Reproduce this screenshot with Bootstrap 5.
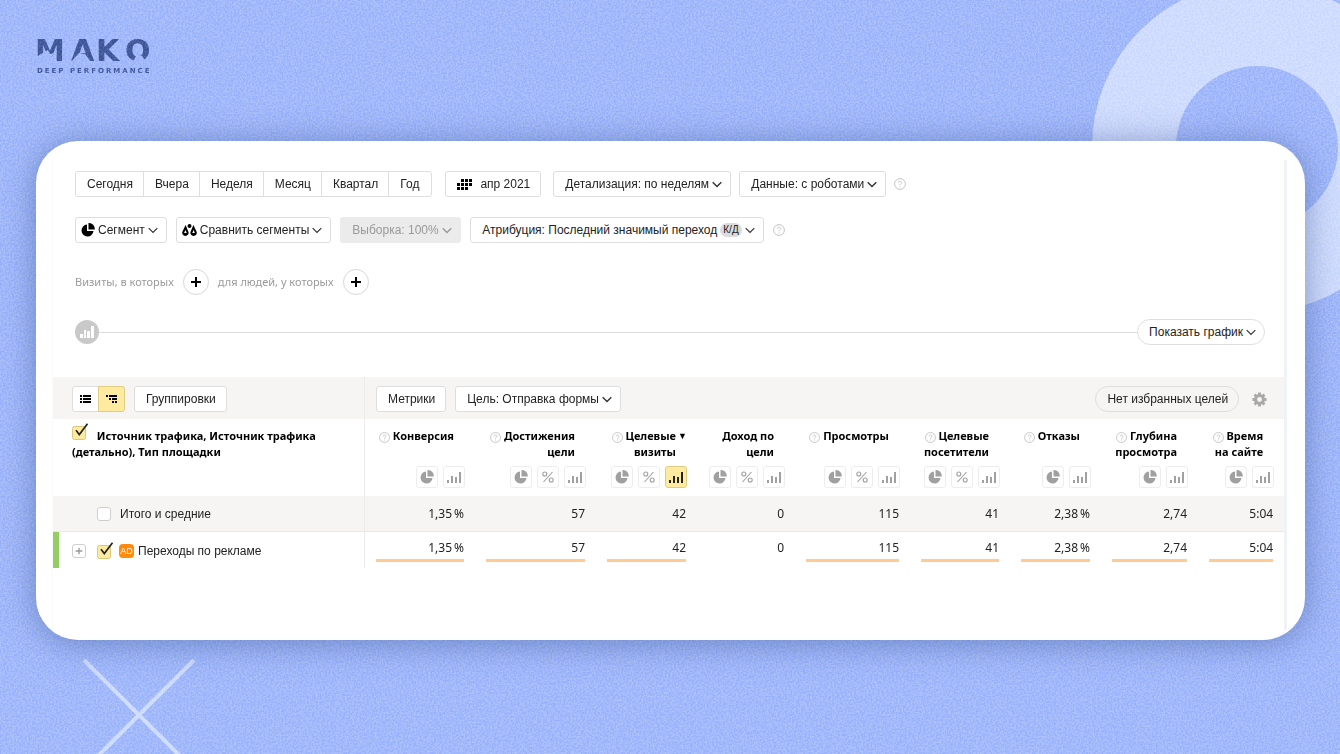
<!DOCTYPE html>
<html lang="ru">
<head>
<meta charset="utf-8">
<meta name="viewport" content="width=device-width, initial-scale=1">
<title>MAKO — отчёт по источникам трафика</title>
<link href="https://cdn.jsdelivr.net/npm/bootstrap@5.3.0/dist/css/bootstrap.min.css" rel="stylesheet">
<style>
  :root {
    --ui: "Liberation Sans", Arial, sans-serif;
    --txt: "Noto Sans", "Open Sans", sans-serif;
    --line: #dedede;
    --stripe: #f6f5f3;
    --sun: #ffeba0;
  }
  body { background: #a5bcfb; font: 12px/16px var(--txt); color: #222; }
  .stage { min-height: 100vh; }
  .decor { pointer-events: none; }
  .decor-ring { width: 248px; height: 312px; }
  .decor-cross { left: 82px; width: 114px; height: 96px; }
  .decor-grain { opacity: .22; mix-blend-mode: soft-light; }
  .brand { height: 141px; padding: 36px; }
  .brand svg { overflow: visible; }
  .panel { margin: 0 35px 0 36px; padding: 19px 18px 10px 16px; border-radius: 42px; background: #fff; box-shadow: 0 3px 34px rgba(50, 75, 140, .5); }
  .sheet { border-right: 3px solid #eff3f8; border-left: 1px solid #fafafa; padding: 11px 0 62px; }
  .controls { padding: 0 19px 0 22px; }
  .filters { gap: 9px; margin: 20px 0 26px; }
  .conditions { gap: 9px; font-size: 11px; color: #9b9b9b; }
  .chart-toggle { margin: 24px 0 32px; }
  .ctl { height: 26px; padding: 0 10px 0 11px; border: 1px solid var(--line); border-radius: 3px; background-color: #fff; font: 12px/24px var(--ui); color: #222; white-space: nowrap; }
  .ctl svg { flex: none; }
  .ctl-drop { display: flex; align-items: center; gap: 3px; padding-right: 8px; }
  .ctl-tight { padding-left: 5px; }
  select.ctl { appearance: none; padding-right: 21px; background: #fff url("data:image/svg+xml,%3Csvg xmlns='http://www.w3.org/2000/svg' width='10' height='7'%3E%3Cpath d='M.7 1.2 5 5.5 9.3 1.2' fill='none' stroke='%23333' stroke-width='1.4'/%3E%3C/svg%3E") no-repeat right 8px center; }
  select.ctl:disabled { background: #ebebeb url("data:image/svg+xml,%3Csvg xmlns='http://www.w3.org/2000/svg' width='10' height='7'%3E%3Cpath d='M.7 1.2 5 5.5 9.3 1.2' fill='none' stroke='%23999' stroke-width='1.3'/%3E%3C/svg%3E") no-repeat right 8px center; border-color: #ebebeb; color: #999; opacity: 1; }
  .periods { margin-right: 13px; }
  .periods .ctl + .ctl, .modes .ctl + .ctl { margin-left: -1px; }
  .periods .ctl:not(:first-child), .modes .ctl:not(:first-child) { border-top-left-radius: 0; border-bottom-left-radius: 0; }
  .periods .ctl:not(:last-child), .modes .ctl:not(:last-child) { border-top-right-radius: 0; border-bottom-right-radius: 0; }
  .periods .ctl:last-child { padding-right: 12px; }
  .modes .ctl { width: 27px; padding: 0; }
  .ctl-pill { border-radius: 13px; }
  .modes .ctl-on { background: var(--sun); border-color: #e0cd85; }
  .tools { gap: 9px; }
  .gear { margin: 0 6px 0 4px; }
  .plus { width: 26px; height: 26px; border: 1px solid #d8d8d8; border-radius: 50%; background: #fff; }
  .tag { background: #dcdcdc; border-radius: 8px; padding: 0 3px; font-size: 10px; line-height: 14px; }
  .help { width: 12px; height: 12px; color: #c4c4c4; flex: none; }
  .knob { width: 24px; height: 24px; border-radius: 50%; background: #c9c9c9; color: #fff; }
  .rule-line { height: 1px; background: #dcdcdc; }

  .report { table-layout: fixed; border-collapse: separate; border-spacing: 0; }
  .report th, .report td { padding: 0 11px; text-align: right; vertical-align: top; font-weight: 400; }
  .report th:first-child { text-align: left; padding-left: 19px; border-right: 1px solid #ebebeb; }
  .bar-row > * { height: 42px; background: var(--stripe); }
  .report .bar-row th, .report .bar-row td { padding-top: 9px; }
  .head-row { height: 77px; }
  .report .head-row th { padding-top: 9px; font-size: 11px; font-weight: 700; color: #000; }
  .head-row th:not(:first-child) { padding-right: 10px; }
  .head-row .tick { margin: -6px 5px 0 0; }
  .label-box { height: 38px; }
  .sorter { width: 11px; font-size: 9px; }
  .label-box .help { width: 11px; height: 11px; }
  .chips { gap: 5px; }
  .chip { width: 22px; height: 22px; border: 1px solid #ededed; border-radius: 3px; background: #fff; color: #a0a0a0; padding: 0; }
  .chip-on { background: var(--sun); border-color: #e0cd85; color: #222; }
  .sum-row > * { height: 36px; background: var(--stripe); border-bottom: 1px solid #e9e9e9; }
  .report .sum-row td { padding-top: 10px; }
  .report .sum-row th { padding: 10px 0 0 44px; }
  .data-row > * { height: 36px; }
  .report .data-row td { padding-top: 8px; }
  .report .data-row th { padding: 10px 0 0 13px; border-left: 6px solid #96cd62; }
  .data-row .tick { margin: 0 5px 0 11px; }
  .meter { height: 3px; margin-top: 3px; background: #ffcb94; }
  .row-name { font-family: var(--ui); font-size: 12px; }
  .tick { appearance: none; width: 14px; height: 14px; margin: 0; border: 1px solid #cfcfcf; border-radius: 3px; background: #fff; }
  .tick:checked { width: 17px; height: 17px; border: 0; border-radius: 0; background: url("data:image/svg+xml,%3Csvg xmlns='http://www.w3.org/2000/svg' width='17' height='17'%3E%3Crect x='.5' y='3.5' width='13' height='13' rx='2' fill='%23ffeba0' stroke='%23dcc77c'/%3E%3Cpath d='M4 7.2 7.3 11.5 15.5.8' fill='none' stroke='%23222' stroke-width='1.7'/%3E%3C/svg%3E"); }
  .expand { width: 14px; height: 14px; border: 1px solid #cfcfcf; border-radius: 3px; background: #fff; padding: 0; color: #999; }
  .ad { width: 15px; height: 14px; border-radius: 4px; background: #ff8a0c; color: #fff; font: 9px/14px var(--ui); text-align: center; }
</style>
</head>
<body>
<svg class="d-none" xmlns="http://www.w3.org/2000/svg">
  <symbol id="pie" viewBox="0 0 14 14"><path d="M6 1.500A6 6 0 1 0 12.500 8H6z"/><path d="M7.500 0A6 6 0 0 1 13.800 6.500H7.500z"/></symbol>
  <symbol id="bars" viewBox="0 0 14 11"><path d="M0 8h2v3H0zM4 4h2v7H4zM8 5h2v6H8zM12 0h2v11h-2z"/></symbol>
  <symbol id="pct" viewBox="0 0 12 12"><g fill="none" stroke="currentColor" stroke-width="1.100"><circle cx="2.800" cy="3" r="2"/><circle cx="9.200" cy="9" r="2"/><path d="M10.500 1 1.500 11"/></g></symbol>
  <symbol id="chev" viewBox="0 0 10 7"><path d="M.7 1.200 5 5.500 9.300 1.200" fill="none" stroke="#333" stroke-width="1.200"/></symbol>
  <symbol id="help" viewBox="0 0 12 12"><g fill="none" stroke="currentColor"><circle cx="6" cy="6" r="5.400"/><path d="M4.400 4.800c0-2.100 3.200-2.100 3.200-.2C7.600 5.700 6 5.700 6 7.200M6 8.300v1"/></g></symbol>
  <symbol id="plus" viewBox="0 0 12 12"><path d="M6 1v10M1 6h10" stroke="currentColor" stroke-width="2"/></symbol>
</svg>

<div class="stage position-relative overflow-hidden">
  <svg class="decor decor-ring position-absolute top-0 end-0" viewBox="0 0 248 312" fill="none"><circle cx="165" cy="147" r="123" stroke="#d2defe" stroke-width="84"/></svg>
  <svg class="decor decor-cross position-absolute bottom-0" viewBox="0 0 114 96"><path d="M2 2l110 110M112 2L2 112" stroke="#d2defe" stroke-width="4"/></svg>

  <header class="brand position-relative">
    <svg width="124" height="40" viewBox="0 0 124 40" role="img" aria-label="MAKO Deep Performance">
      <g fill="#455d9e" font-family="DejaVu Sans" font-weight="700">
        <text x="-1 35 60 89" y="25" font-size="30">MAKO</text>
        <text x="1" y="37" font-size="7" letter-spacing="2">DEEP PERFORMANCE</text>
      </g>
      <path fill="#a5bcfb" d="M0 21 12 14l2 4 4-1-6 9H0zM35 26l8-9 6 1 6 8zM97 26l3-6h6l4 6z"/>
    </svg>
  </header>

  <svg class="decor decor-grain position-absolute top-0 start-0 w-100 h-100">
    <filter id="grain" color-interpolation-filters="sRGB"><feTurbulence type="fractalNoise" baseFrequency=".55" numOctaves="3" seed="4"/><feColorMatrix values="3 0 0 0 -1.100  3 0 0 0 -1.100  3 0 0 0 -1.100  0 0 0 0 1"/></filter>
    <rect width="100%" height="100%" filter="url(#grain)"/>
  </svg>

  <main class="panel position-relative">
    <div class="sheet">
      <div class="controls">
        <div class="d-flex align-items-center">
          <div class="periods d-flex">
            <button class="ctl" type="button">Сегодня</button><button class="ctl" type="button">Вчера</button><button class="ctl" type="button">Неделя</button><button class="ctl" type="button">Месяц</button><button class="ctl" type="button">Квартал</button><button class="ctl" type="button">Год</button>
          </div>
          <button class="ctl d-flex align-items-center gap-2 me-2" type="button">
            <svg width="15" height="11" viewBox="0 0 15 11"><path d="M0 4h3v3H0zM0 8h3v3H0zM4 0h3v3H4zM4 4h3v3H4zM4 8h3v3H4zM8 0h3v3H8zM8 4h3v3H8zM8 8h3v3H8zM12 0h3v3h-3zM12 4h3v3h-3z"/></svg>апр 2021
          </button>
          <select class="ctl ms-1 me-2" aria-label="Детализация"><option>Детализация: по неделям</option></select>
          <select class="ctl me-2" aria-label="Данные"><option>Данные: с роботами</option></select>
          <svg class="help"><use href="#help"/></svg>
        </div>
        <div class="filters d-flex align-items-center">
          <button class="ctl ctl-drop ctl-tight" type="button"><svg width="14" height="14"><use href="#pie"/></svg>Сегмент<svg width="10" height="7"><use href="#chev"/></svg></button>
          <button class="ctl ctl-drop ctl-tight" type="button">
            <svg width="15" height="13" viewBox="0 0 15 13"><circle cx="7.500" cy="2" r="2"/><path fill-rule="evenodd" d="M3.600 1 .5 7.500a3.200 3.200 0 1 0 5.800 0zM3.400 6l1.300 3H2.100zM11.400 1 8.700 7.500a3.200 3.200 0 1 0 5.800 0zM11.600 6l1.300 3h-2.600z"/></svg>Сравнить сегменты<svg width="10" height="7"><use href="#chev"/></svg></button>
          <select class="ctl" aria-label="Выборка" disabled><option>Выборка: 100%</option></select>
          <button class="ctl ctl-drop" type="button">Атрибуция: Последний значимый переход <span class="tag">К/Д</span><svg width="10" height="7"><use href="#chev"/></svg></button>
          <svg class="help"><use href="#help"/></svg>
        </div>
        <div class="conditions d-flex align-items-center">
          <span>Визиты, в которых</span>
          <button class="plus d-flex align-items-center justify-content-center p-0" type="button" aria-label="Добавить условие визитов"><svg width="12" height="12"><use href="#plus"/></svg></button>
          <span>для людей, у которых</span>
          <button class="plus d-flex align-items-center justify-content-center p-0" type="button" aria-label="Добавить условие людей"><svg width="12" height="12"><use href="#plus"/></svg></button>
        </div>
        <div class="chart-toggle d-flex align-items-center">
          <span class="knob d-flex align-items-center justify-content-center"><svg width="14" height="12" viewBox="0 0 14 12" fill="currentColor"><path d="M0 8h3v4H0zM4 4h2v8H4zM7 5h3v7H7zM11 0h3v12h-3z"/></svg></span>
          <span class="rule-line flex-grow-1"></span>
          <button class="ctl ctl-drop ctl-pill" type="button">Показать график<svg width="10" height="7"><use href="#chev"/></svg></button>
        </div>
      </div>

      <table class="report w-100" id="report">
        <colgroup><col style="width:312px"><col style="width:110px"><col style="width:121px"><col style="width:101px"><col style="width:98px"><col style="width:115px"><col style="width:100px"><col style="width:91px"><col style="width:97px"><col style="width:86px"></colgroup>
        <thead>
          <tr class="bar-row">
            <th>
              <div class="tools d-flex">
                <div class="modes d-flex">
                  <button class="ctl d-flex align-items-center justify-content-center" type="button" aria-label="Список"><svg width="11" height="8" viewBox="0 0 11 8"><path d="M0 0h2v2H0zM3 0h8v2H3zM0 3h2v2H0zM3 3h8v2H3zM0 6h2v2H0zM3 6h8v2H3z"/></svg></button>
                  <button class="ctl ctl-on d-flex align-items-center justify-content-center" type="button" aria-label="Дерево"><svg width="11" height="8" viewBox="0 0 11 8"><path d="M0 0h2v2H0zM3 0h8v2H3zM3 3h2v2H3zM6 3h5v2H6zM6 6h2v2H6zM9 6h2v2H9z"/></svg></button>
                </div>
                <button class="ctl" type="button">Группировки</button>
              </div>
            </th>
            <td colspan="9">
              <div class="tools d-flex align-items-center">
                <button class="ctl" type="button">Метрики</button>
                <select class="ctl" aria-label="Цель"><option>Цель: Отправка формы</option></select>
                <button class="ctl ctl-pill ms-auto bg-transparent" type="button">Нет избранных целей</button>
                <svg class="gear" width="15" height="15" viewBox="0 0 16 16" fill="none" stroke="#a9a9a9"><circle cx="8" cy="8" r="4.200" stroke-width="3.200"/><path stroke-width="3" d="M8 .5v3M8 12.500v3M.5 8h3M12.500 8h3M2.700 2.700l2 2M11.300 11.300l2 2M2.700 13.300l2-2M11.300 4.700l2-2"/></svg>
              </div>
            </td>
          </tr>
          <tr class="head-row">
            <th scope="col"><input class="tick" type="checkbox" checked aria-label="Выбрать все"> Источник трафика, Источник трафика (детально), Тип площадки</th>
            <th scope="col" data-label="Конверсия" data-tools="pie bars"></th>
            <th scope="col" data-label="Достижения|цели" data-tools="pie pct bars"></th>
            <th scope="col" data-label="Целевые|визиты" data-tools="pie pct bars" data-sorted></th>
            <th scope="col" data-label="Доход по|цели" data-tools="pie pct bars" data-nohelp></th>
            <th scope="col" data-label="Просмотры" data-tools="pie pct bars"></th>
            <th scope="col" data-label="Целевые|посетители" data-tools="pie pct bars"></th>
            <th scope="col" data-label="Отказы" data-tools="pie bars"></th>
            <th scope="col" data-label="Глубина|просмотра" data-tools="pie bars"></th>
            <th scope="col" data-label="Время|на сайте" data-tools="pie bars"></th>
          </tr>
        </thead>
        <tbody>
          <tr class="sum-row">
            <th scope="row"><div class="tools d-flex align-items-center"><input class="tick" type="checkbox" id="sum"><label class="row-name" for="sum">Итого и средние</label></div></th>
            <td>1,35&thinsp;%</td><td>57</td><td>42</td><td>0</td><td>115</td><td>41</td><td>2,38&thinsp;%</td><td>2,74</td><td>5:04</td>
          </tr>
          <tr class="data-row">
            <th scope="row"><div class="d-flex align-items-center"><button class="expand d-flex align-items-center justify-content-center" type="button" aria-label="Развернуть"><svg width="8" height="8"><use href="#plus"/></svg></button><input class="tick" type="checkbox" id="ads" checked><span class="ad me-1">AD</span><label class="row-name" for="ads">Переходы по рекламе</label></div></th>
            <td>1,35&thinsp;%<div class="meter"></div></td><td>57<div class="meter"></div></td><td>42<div class="meter"></div></td><td>0</td><td>115<div class="meter"></div></td><td>41<div class="meter"></div></td><td>2,38&thinsp;%<div class="meter"></div></td><td>2,74<div class="meter"></div></td><td>5:04<div class="meter"></div></td>
          </tr>
        </tbody>
      </table>
    </div>
  </main>
</div>

<script src="https://cdn.jsdelivr.net/npm/bootstrap@5.3.0/dist/js/bootstrap.bundle.min.js"></script>
<script>
  // Metric headings: label with help mark, sort arrow slot and the row of view buttons
  const sizes = { pie: [14, 14], pct: [12, 12], bars: [14, 11] };
  const names = { pie: 'Круговая диаграмма', pct: 'Проценты', bars: 'Столбцы' };
  document.querySelectorAll('th[data-label]').forEach(th => {
    const sorted = 'sorted' in th.dataset;
    const help = 'nohelp' in th.dataset ? '' : '<svg class="help"><use href="#help"/></svg> ';
    const chips = th.dataset.tools.split(' ').map(t =>
      `<button type="button" aria-label="${names[t]}" class="chip d-flex align-items-center justify-content-center ${sorted && t === 'bars' ? 'chip-on' : ''}"><svg width="${sizes[t][0]}" height="${sizes[t][1]}" fill="currentColor"><use href="#${t}"/></svg></button>`).join('');
    th.innerHTML = `<div class="label-box d-flex justify-content-end"><div class="text-nowrap">${help}${th.dataset.label.replace('|', '<br>')}</div><span class="sorter">${sorted ? '▼' : ''}</span></div><div class="chips d-flex justify-content-end">${chips}</div>`;
  });
</script>
</body>
</html>
